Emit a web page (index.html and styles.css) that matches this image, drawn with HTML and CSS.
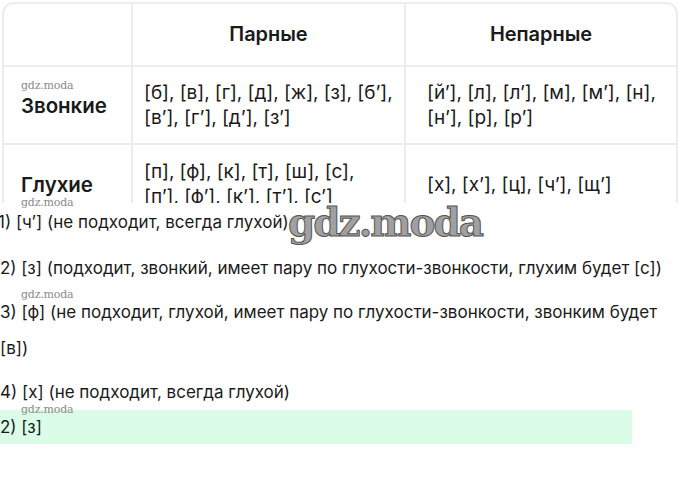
FILE: index.html
```html
<!DOCTYPE html>
<html lang="ru">
<head>
<meta charset="utf-8">
<link rel="stylesheet" href="styles.css">
</head>
<body>
<div class="page">
  <div class="table-clip">
    <div class="table">
      <div class="cell head"></div>
      <div class="cell head">Парные</div>
      <div class="cell head">Непарные</div>
      <div class="cell label">Звонкие</div>
      <div class="cell c2">[б], [в], [г], [д], [ж], [з], [б’],<br>[в’], [г’], [д’], [з’]</div>
      <div class="cell c3">[й’], [л], [л’], [м], [м’], [н],<br>[н’], [р], [р’]</div>
      <div class="cell label">Глухие</div>
      <div class="cell c2">[п], [ф], [к], [т], [ш], [с],<br>[п’], [ф’], [к’], [т’], [с’]</div>
      <div class="cell c3">[х], [х’], [ц], [ч’], [щ’]</div>
    </div>
  </div>
  <div class="answers">
    <p class="line l1">1) [ч’] (не подходит, всегда глухой)</p>
    <p class="line l2">2) [з] (подходит, звонкий, имеет пару по глухости-звонкости, глухим будет [с])</p>
    <p class="line l3">3) [ф] (не подходит, глухой, имеет пару по глухости-звонкости, звонким будет [в])</p>
    <p class="line l4">4) [х] (не подходит, всегда глухой)</p>
    <p class="line result">2) [з]</p>
  </div>
  <span class="wm w1">gdz.moda</span>
  <span class="wm w2">gdz.moda</span>
  <span class="wm w3">gdz.moda</span>
  <span class="wm w4">gdz.moda</span>
  <span class="wm-big">gdz.moda</span>
</div>
</body>
</html>
```

FILE: styles.css
```css
* { box-sizing: border-box; }
html, body { margin: 0; padding: 0; background: #fff; }
body { font-family: Inter, "Noto Sans", sans-serif; color: #1a1a1a; }
.page { position: relative; width: 680px; height: 480px; overflow: hidden; }

.table-clip { height: 203px; overflow: hidden; padding: 2px 2px 0 2px; }
.table {
  display: grid;
  grid-template-columns: 127px 271px 1fr;
  grid-template-rows: 61px 76px 78px;
  gap: 2px;
  background: #ececec;
  border: 2px solid #ececec;
  border-radius: 12px;
  overflow: hidden;
}
.cell { background: #fff; display: flex; align-items: center; font-size: 19px; line-height: 25px; color: #1a1a1a; letter-spacing: -0.05px; white-space: nowrap; overflow: hidden; }
.head { justify-content: center; font-size: 20px; font-weight: 600; }
.label { padding-left: 17px; font-size: 20.5px; font-weight: 600; }
.c2 { padding-left: 11px; }
.c3 { padding-left: 21px; }

.answers { width: 668px; font-size: 17px; line-height: 36px; color: #1a1a1a; }
.line { margin: 0 0 10px 0; }
.l1 { margin-top: 1px; margin-left: -2px; }
.l2 { margin-bottom: 8px; }
.l3 { margin-bottom: 8px; }
.l4 { margin-bottom: 0; }
.result { background: #dbfde8; width: 632px; height: 34px; line-height: 34px; margin: 0; }

.wm { position: absolute; font-family: "DejaVu Serif", serif; font-size: 11px; color: #8a8a8a; letter-spacing: -0.2px; }
.w1 { left: 21px; top: 79px; }
.w2 { left: 21px; top: 196px; }
.w3 { left: 21px; top: 288px; }
.w4 { left: 21px; top: 403px; }
.wm-big {
  position: absolute; left: 288px; top: 199px;
  font-family: "DejaVu Serif", serif; font-weight: bold; font-size: 39px; letter-spacing: -2px;
  color: #a0a0a0;
  -webkit-text-stroke: 1px #555;
}
```
